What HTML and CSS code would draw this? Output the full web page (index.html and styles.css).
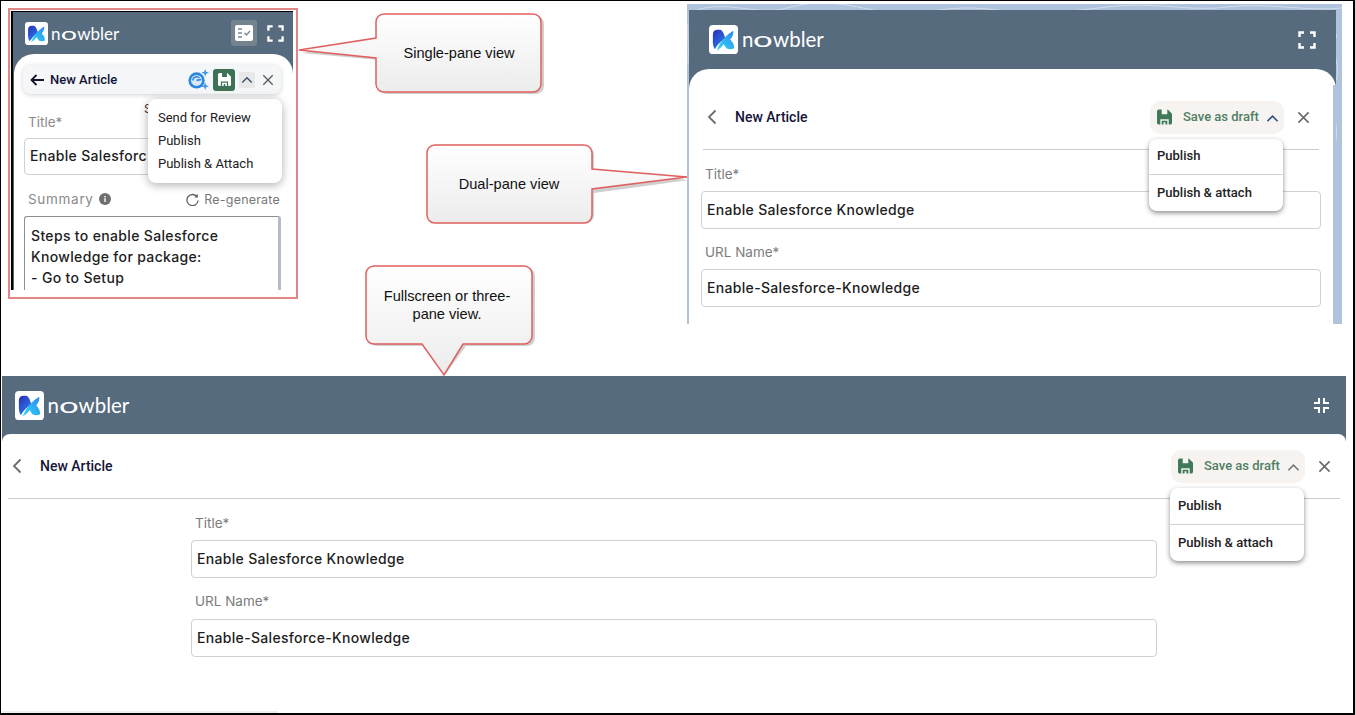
FILE: index.html
```html
<!DOCTYPE html>
<html lang="en">
<head>
<meta charset="utf-8">
<title>Article views</title>
<link rel="stylesheet" href="styles.css">
</head>
<body>
<svg class="defs" width="0" height="0" aria-hidden="true">
  <defs>
    <linearGradient id="lg1" x1="0" y1="0" x2="0.7" y2="1"><stop offset="0" stop-color="#2a2db5"/><stop offset="1" stop-color="#2a7ff0"/></linearGradient>
    <linearGradient id="lg2" x1="0" y1="1" x2="1" y2="0"><stop offset="0" stop-color="#2fdcf5"/><stop offset="1" stop-color="#2f86f0"/></linearGradient>
    <linearGradient id="cg" x1="0" y1="0" x2="0" y2="1"><stop offset="0" stop-color="#ffffff"/><stop offset="1" stop-color="#ececec"/></linearGradient>
    <symbol id="logo" viewBox="0 0 30 30">
      <rect width="30" height="30" rx="4" fill="#fff"/>
      <path d="M4 10Q4 5 9 5h2q3 0 5 6l1 3Q10 18 6 25 4 22 4 18z" fill="url(#lg1)"/>
      <path d="M8 26Q13 13 25 6q1 4-3 9 4 4 4 9-4 2-8 0-2-3-3-4-3 5-7 6z" fill="url(#lg2)"/>
    </symbol>
    <symbol id="floppy" viewBox="0 0 16 16">
      <path fill-rule="evenodd" d="M2 0h3v5h6V0h.5L16 4.500V14a2 2 0 0 1-2 2h-1.500v-5.500h-9V16H2a2 2 0 0 1-2-2V2a2 2 0 0 1 2-2zM5 12h6v4H5zM7 13.500v2.500h2v-2.500z" fill="currentColor"/>
    </symbol>
    <symbol id="expand" viewBox="0 0 18 18">
      <path d="M1.500 6V1.500H6M12 1.500h4.500V6M16.500 12v4.500H12M6 16.500H1.500V12" fill="none" stroke="currentColor" stroke-width="2.400"/>
    </symbol>
    <symbol id="close" viewBox="0 0 14 14">
      <path d="M1.500 1.500l11 11M12.500 1.500l-11 11" fill="none" stroke="currentColor" stroke-width="1.600"/>
    </symbol>
    <symbol id="chev-up" viewBox="0 0 14 9">
      <path d="M1.500 7.500L7 2l5.500 5.500" fill="none" stroke="currentColor" stroke-width="1.700"/>
    </symbol>
    <symbol id="chev-left" viewBox="0 0 10 16">
      <path d="M8.500 1.500L2 8l6.500 6.500" fill="none" stroke="currentColor" stroke-width="1.800"/>
    </symbol>
  </defs>
</svg>

<main class="canvas">
  <div class="frame"></div>

  <section class="pane pane-a">
    <header class="bar bar-a">
      <svg class="logo"><use href="#logo"/></svg>
      <span class="wordmark wordmark-a">n<span class="wide-o">o</span>wbler</span>
      <span class="spacer"></span>
      <span class="task-btn">
        <svg class="task-ic" viewBox="0 0 18 16"><rect width="18" height="16" rx="2" fill="#fff"/><path d="M3 4h4M3 8h4M3 12h4" stroke="#7d8b98" stroke-width="1.500"/><path d="M9.500 8l2 2 3.500-4" fill="none" stroke="#7d8b98" stroke-width="1.500"/></svg>
      </span>
      <svg class="expand-a"><use href="#expand"/></svg>
    </header>
    <div class="sheet sheet-a">
      <div class="toolbar">
        <svg class="arrow" viewBox="0 0 14 12"><path d="M6.500 1L1.500 6l5 5M1.500 6H14" fill="none" stroke="#14142e" stroke-width="1.800"/></svg>
        <span class="tb-title">New Article</span>
        <span class="spacer"></span>
        <svg class="ai-ic" viewBox="0 0 22 22"><circle cx="9" cy="12" r="8.500" fill="#2a86e0"/><circle cx="9" cy="12" r="5.800" fill="#d6e9fb"/><path d="M5 12a4 4 0 0 1 7-2.500" fill="none" stroke="#2a86e0" stroke-width="1.500"/><path d="M9 12l5-1" stroke="#2a86e0" stroke-width="1.800"/><path d="M18 0l1 3 3 1-3 1-1 3-1-3-3-1 3-1zM18 14l1 3 3 1-3 1-1 3-1-3-3-1 3-1z" fill="#3b94e6"/></svg>
        <span class="save-sq"><svg class="save-sq-ic"><use href="#floppy"/></svg></span>
        <span class="chev-sq"><svg class="chev-sq-ic"><use href="#chev-up"/></svg></span>
        <svg class="tb-close"><use href="#close"/></svg>
      </div>
      <div class="form-a">
        <label class="lbl lbl-a">Title*</label>
        <div class="field field-a">Enable Salesforc</div>
        <div class="sum-row">
          <span class="lbl lbl-a lbl-sum">Summary</span>
          <svg class="info" viewBox="0 0 12 12"><circle cx="6" cy="6" r="6" fill="#6f6f6f"/><path d="M6 5.200V9M6 3v1.400" stroke="#fff" stroke-width="1.400"/></svg>
          <span class="spacer"></span>
          <svg class="regen" viewBox="0 0 14 14"><path d="M11.800 4A6 6 0 1 0 13 8" fill="none" stroke="#666" stroke-width="1.400"/><path d="M12.800 0.800v4h-4z" fill="#666"/></svg>
          <span class="regen-text">Re-generate</span>
        </div>
        <div class="area">Steps to enable Salesforce<br>Knowledge for package:<br>- Go to Setup</div>
      </div>
      <span class="stray">S</span>
      <ul class="menu-a">
        <li>Send for Review</li>
        <li>Publish</li>
        <li>Publish &amp; Attach</li>
      </ul>
    </div>
  </section>

  <section class="pane pane-b">
    <svg class="swirl" viewBox="0 0 655 320" preserveAspectRatio="none"><path d="M10 6C40-4 70 12 100 4S150-2 190 7 250 0 300 5 370 9 420 3 500 8 540 3 620 8 655 4M650 30c-8 20 6 30-2 50s6 40 0 60M1 20c-1 10 1 20 0 40" fill="none" stroke="#d2deed" stroke-width="1"/></svg>
    <div class="pane-b-inner">
      <header class="bar bar-b">
        <svg class="logo"><use href="#logo"/></svg>
        <span class="wordmark">n<span class="wide-o">o</span>wbler</span>
        <span class="spacer"></span>
        <svg class="expand-b"><use href="#expand"/></svg>
      </header>
      <div class="sheet sheet-b">
        <div class="head head-b">
          <svg class="back"><use href="#chev-left"/></svg>
          <span class="head-title">New Article</span>
          <span class="spacer"></span>
          <span class="save-btn">
            <svg class="save-ic"><use href="#floppy"/></svg>
            <span class="save-text">Save as draft</span>
            <svg class="save-chev blue"><use href="#chev-up"/></svg>
          </span>
          <svg class="head-close"><use href="#close"/></svg>
        </div>
        <div class="form-b">
          <label class="lbl">Title*</label>
          <div class="field">Enable Salesforce Knowledge</div>
          <label class="lbl lbl-next">URL Name*</label>
          <div class="field">Enable-Salesforce-Knowledge</div>
        </div>
        <ul class="menu menu-b">
          <li>Publish</li>
          <li>Publish &amp; attach</li>
        </ul>
      </div>
    </div>
  </section>

  <section class="pane pane-c">
    <header class="bar bar-c">
      <svg class="logo"><use href="#logo"/></svg>
      <span class="wordmark">n<span class="wide-o">o</span>wbler</span>
      <span class="spacer"></span>
      <svg class="shrink" viewBox="0 0 15 15"><path d="M5 0v5H0M10 0v5h5M10 15v-5h5M5 15v-5H0" fill="none" stroke="#fff" stroke-width="2"/></svg>
    </header>
    <div class="sheet sheet-c">
      <div class="head head-c">
        <svg class="back"><use href="#chev-left"/></svg>
        <span class="head-title">New Article</span>
        <span class="spacer"></span>
        <span class="save-btn">
          <svg class="save-ic"><use href="#floppy"/></svg>
          <span class="save-text">Save as draft</span>
          <svg class="save-chev"><use href="#chev-up"/></svg>
        </span>
        <svg class="head-close"><use href="#close"/></svg>
      </div>
      <div class="form-c">
        <label class="lbl">Title*</label>
        <div class="field">Enable Salesforce Knowledge</div>
        <label class="lbl lbl-next">URL Name*</label>
        <div class="field">Enable-Salesforce-Knowledge</div>
      </div>
      <ul class="menu menu-c">
        <li>Publish</li>
        <li>Publish &amp; attach</li>
      </ul>
    </div>
  </section>

  <svg class="callout call-1" viewBox="0 0 260 90">
    <path class="co-shadow" d="M89 3h149a8 8 0 0 1 8 8v62a8 8 0 0 1-8 8H89a8 8 0 0 1-8-8V47L4 40l77-13V11a8 8 0 0 1 8-8z"/>
    <path class="co-body" d="M86 1h149a8 8 0 0 1 8 8v62a8 8 0 0 1-8 8H86a8 8 0 0 1-8-8V45L1 37l77-12V9a8 8 0 0 1 8-8z"/>
    <text class="co-text" x="161" y="45">Single-pane view</text>
  </svg>
  <svg class="callout call-2" viewBox="0 0 270 90">
    <path class="co-shadow" d="M11 3h149a8 8 0 0 1 8 8v16l95 9-95 13v22a8 8 0 0 1-8 8H11a8 8 0 0 1-8-8V11a8 8 0 0 1 8-8z"/>
    <path class="co-body" d="M9 1h149a8 8 0 0 1 8 8v16l95 8-95 12v26a8 8 0 0 1-8 8H9a8 8 0 0 1-8-8V9a8 8 0 0 1 8-8z"/>
    <text class="co-text" x="83" y="45">Dual-pane view</text>
  </svg>
  <svg class="callout call-3" viewBox="0 0 175 115">
    <path class="co-shadow" d="M12 3h150a8 8 0 0 1 8 8v62a8 8 0 0 1-8 8h-61l-21 29-18-29H12a8 8 0 0 1-8-8V11a8 8 0 0 1 8-8z"/>
    <path class="co-body" d="M9 1h150a8 8 0 0 1 8 8v62a8 8 0 0 1-8 8H98l-19 31-22-31H9a8 8 0 0 1-8-8V9a8 8 0 0 1 8-8z"/>
    <text class="co-text" x="82" y="36">Fullscreen or three-</text>
    <text class="co-text" x="82" y="54">pane view.</text>
  </svg>
  <div class="scroll-stub"></div>
</main>
</body>
</html>
```

FILE: styles.css
```css
* { box-sizing: border-box; }
html, body { margin: 0; padding: 0; background: #fff; }
body { width: 1355px; height: 715px; overflow: hidden; font-family: "Inter", "Liberation Sans", sans-serif; }
ul { list-style: none; margin: 0; padding: 0; }
svg { display: block; flex: none; }
.defs { position: absolute; }
.spacer { flex: 1; }

.canvas { position: relative; width: 1355px; height: 715px; background: #fff; overflow: hidden; }
.canvas::after { content: ""; position: absolute; inset: 0; border: 1px solid #000; border-bottom-width: 2px; border-right-width: 2px; pointer-events: none; }

.frame { position: absolute; left: 8px; top: 8px; width: 290px; height: 291px; border: 2px solid #e28686; }
.pane { position: absolute; overflow: hidden; }

/* shared */
.bar { display: flex; align-items: center; background: #566b7e; color: #fff; }
.logo { width: 29px; height: 29px; }
.wordmark { font-family: "Lato", sans-serif; font-weight: 400; font-size: 20.500px; line-height: 1; color: #fff; margin-left: 4px; }
.wide-o { display: inline-block; transform: scaleX(1.7); margin: 0 4px; }
.sheet { position: relative; background: #fff; flex: 1; }

.lbl { display: block; font-size: 13.5px; line-height: 18px; color: #7c7c7c; margin-left: 4px; }
.lbl-next { margin-top: 14px; }
.field { height: 38px; margin-top: 8px; padding: 0 5px 2px; border: 1px solid #ccd2d8; border-radius: 4px; display: flex; align-items: center; font-size: 14px; font-weight: 500; color: #1d1d1d; letter-spacing: 0.32px; white-space: nowrap; overflow: hidden; }

.head { display: flex; align-items: center; border-bottom: 1px solid #c9ced3; }
.head-title { font-family: "Roboto", sans-serif; font-weight: 500; font-size: 14px; color: #14143a; }
.back { width: 10px; height: 16px; color: #6d6d6d; }
.save-btn { display: flex; align-items: center; width: 134px; height: 33px; padding: 0 6px 0 7px; border-radius: 10px; background: #f6f3f1; }
.save-ic { width: 15px; height: 16px; color: #3f7a58; }
.save-text { font-family: "Roboto", sans-serif; font-weight: 500; font-size: 13px; color: #4f7f63; margin: 0 0 2px 11px; white-space: nowrap; }
.save-chev { width: 13px; height: 9px; margin: 2px 0 0 7px; color: #777; }
.save-chev.blue { color: #2f4f80; }
.head-close { width: 13px; height: 13px; margin-left: 13px; color: #666; }

.menu { position: absolute; width: 134px; background: #fff; border-radius: 8px; box-shadow: 0 2px 5px rgba(0,0,0,.45); font-family: "Roboto", sans-serif; font-weight: 500; font-size: 13px; color: #222; display: flex; flex-direction: column; }
.menu li { flex: 1; display: flex; align-items: center; padding: 0 0 2px 8px; }
.menu li + li { border-top: 1px solid #cfd2d6; }

/* single pane */
.pane-a { left: 11px; top: 11px; width: 282px; height: 279px; background: #566b7e; border-left: 2px solid #000; border-top: 1px solid #000; display: flex; flex-direction: column; }
.bar-a { height: 42px; flex: none; padding: 0 9px 0 12px; }
.bar-a .logo { width: 23px; height: 23px; }
.wordmark-a { font-size: 17px; margin-left: 3px; }
.wordmark-a .wide-o { margin: 0 3.500px; }
.task-btn { width: 26px; height: 26px; border-radius: 3px; background: #74848f; display: flex; align-items: center; justify-content: center; }
.task-ic { width: 18px; height: 16px; }
.expand-a { width: 17px; height: 17px; margin-left: 10px; color: #fff; }
.sheet-a { margin-left: 1px; border-radius: 20px 20px 0 0; background: #fff; }
.toolbar { position: absolute; left: 9px; top: 11px; width: 258px; height: 29px; display: flex; align-items: center; padding: 0 7px 0 7px; background: #f5f6f7; border-radius: 8px; box-shadow: 0 1px 5px rgba(0,0,0,.18); }
.arrow { width: 14px; height: 12px; }
.tb-title { font-family: "Roboto", sans-serif; font-weight: 500; font-size: 13px; color: #14143a; margin-left: 6px; }
.ai-ic { width: 21px; height: 21px; }
.save-sq { width: 22px; height: 22px; margin-left: 4px; border-radius: 3px; background: #3d7256; display: flex; align-items: center; justify-content: center; }
.save-sq-ic { width: 13px; height: 13px; color: #fff; }
.chev-sq { width: 16px; height: 16px; margin-left: 4px; background: #e6e8ea; border-radius: 2px; display: flex; align-items: center; justify-content: center; }
.chev-sq-ic { width: 12px; height: 8px; color: #3d5166; }
.tb-close { width: 12px; height: 12px; margin-left: 7px; color: #55626e; }
.form-a { padding: 59px 12px 0 10px; }
.lbl-a { color: #8a8a8a; margin-left: 4px; }
.lbl-sum { letter-spacing: 0.7px; }
.field-a { height: 37px; margin-top: 7px; width: 256px; padding-bottom: 3px; }
.sum-row { display: flex; align-items: center; height: 18px; margin-top: 15px; }
.info { width: 12px; height: 12px; margin-left: 5px; }
.regen { width: 13px; height: 13px; }
.regen-text { font-size: 12.5px; color: #777; margin: 0 1px 0 5px; letter-spacing: 0.2px; }
.area { height: 80px; margin-top: 8px; padding: 8px 6px; border: 1px solid #8a8f95; border-right: 3px solid #b6bcc6; border-bottom: 0; border-radius: 3px 3px 0 0; font-size: 14px; line-height: 21px; font-weight: 500; color: #1d1d1d; letter-spacing: 0.34px; white-space: nowrap; }
.stray { position: absolute; left: 130px; top: 47px; font-size: 12px; color: #333; }
.menu-a { position: absolute; left: 134px; top: 45px; width: 134px; height: 84px; padding: 7px 0 0 10px; background: #fff; border-radius: 8px; box-shadow: 0 2px 10px rgba(0,0,0,.32); font-family: "Roboto", sans-serif; font-size: 13px; line-height: 23px; color: #222; }

/* dual pane */
.pane-b { left: 687px; top: 4px; width: 655px; height: 320px; background: #b0c3dd; padding: 6px 6px 0 2px; }
.swirl { position: absolute; left: 0; top: 0; width: 100%; height: 100%; }
.pane-b-inner { position: relative; height: 100%; display: flex; flex-direction: column; background: #566b7e; }
.bar-b { height: 59px; flex: none; padding: 0 20px 0 20px; }
.expand-b { width: 18px; height: 18px; color: #fff; }
.sheet-b { border-radius: 20px 20px 0 0; padding: 0 15px 0 12px; }
.sheet-b::after { content: ""; position: absolute; right: 0; top: 16px; bottom: 0; width: 3px; background: #b0c3dd; }
.head-b { height: 81px; padding: 16px 9px 0 4px; margin: 0 2px 0 2px; }
.head-b .head-title { margin-left: 18px; }
.form-b { padding-top: 15px; }
.menu-b { left: 460px; top: 70px; height: 72px; }
.menu-b li:first-child { flex: none; height: 35px; }

/* fullscreen */
.pane-c { left: 2px; top: 376px; width: 1344px; height: 336px; background: #566b7e; display: flex; flex-direction: column; }
.bar-c { height: 58px; flex: none; padding: 0 17px 0 12.500px; }
.shrink { width: 15px; height: 15px; }
.sheet-c { border-radius: 8px 8px 0 0; }
.head-c { height: 65px; margin: 0 6px; padding: 0 9px 0 4px; }
.head-c .head-title { margin-left: 18px; }
.form-c { width: 966px; margin-left: 189px; padding-top: 15px; }
.form-c .field + .lbl-next + .field { margin-top: 9px; }
.menu-c { left: 1168px; top: 54px; height: 73px; }

/* callouts */
.callout { position: absolute; overflow: visible; }
.call-1 { left: 298px; top: 13px; width: 260px; height: 90px; }
.call-2 { left: 426px; top: 144px; width: 270px; height: 90px; }
.call-3 { left: 365px; top: 265px; width: 175px; height: 115px; }
.co-shadow { fill: #cfcfcf; }
.co-body { fill: url(#cg); stroke: #e15f5f; stroke-width: 1.500; }
.co-text { font-family: "Liberation Sans", sans-serif; font-size: 14.600px; fill: #111; text-anchor: middle; }

.scroll-stub { position: absolute; left: 2px; top: 711px; width: 276px; height: 2px; background: #f0f0f2; }
```
